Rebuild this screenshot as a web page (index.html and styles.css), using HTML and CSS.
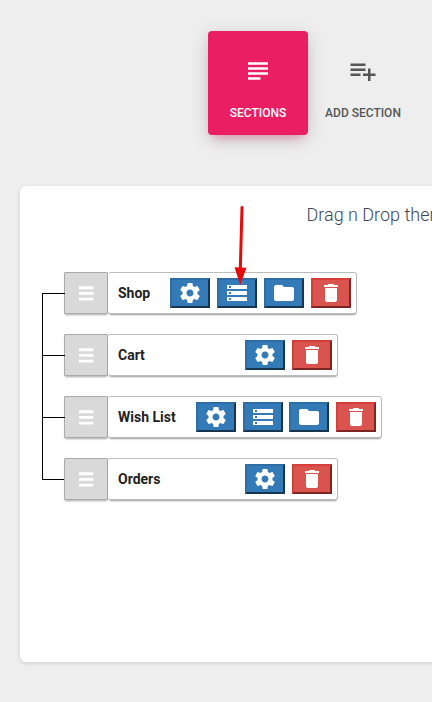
FILE: index.html
```html
<!DOCTYPE html>
<html lang="en">
<head>
<meta charset="utf-8">
<title>Sections</title>
<link rel="stylesheet" href="styles.css">
</head>
<body>
<svg class="defs" aria-hidden="true">
  <symbol id="gear" viewBox="0 0 24 24"><path d="M19.43 12.98c.04-.32.07-.64.07-.98s-.03-.66-.07-.98l2.11-1.65c.19-.15.24-.42.12-.64l-2-3.46c-.12-.22-.39-.3-.61-.22l-2.49 1c-.52-.4-1.08-.73-1.69-.98l-.38-2.65C14.46 2.18 14.25 2 14 2h-4c-.25 0-.46.18-.49.42l-.38 2.65c-.61.25-1.17.59-1.69.98l-2.49-1c-.23-.09-.49 0-.61.22l-2 3.46c-.13.22-.07.49.12.64l2.11 1.65c-.04.32-.07.65-.07.98s.03.66.07.98l-2.11 1.65c-.19.15-.24.42-.12.64l2 3.46c.12.22.39.3.61.22l2.49-1c.52.4 1.08.73 1.69.98l.38 2.65c.03.24.24.42.49.42h4c.25 0 .46-.18.49-.42l.38-2.65c.61-.25 1.17-.59 1.69-.98l2.49 1c.23.09.49 0 .61-.22l2-3.46c.12-.22.07-.49-.12-.64l-2.11-1.65zM12 15.500c-1.930 0-3.500-1.570-3.500-3.500s1.570-3.500 3.500-3.500 3.500 1.570 3.500 3.500-1.570 3.500-3.500 3.500z"/></symbol>
  <symbol id="storage" viewBox="0 0 24 24"><path d="M2 20h20v-4H2v4zm2-3h2v2H4v-2zM2 4v4h20V4H2zm4 3H4V5h2v2zm-4 7h20v-4H2v4zm2-3h2v2H4v-2z"/></symbol>
  <symbol id="folder" viewBox="0 0 24 24"><path d="M10 4H4c-1.100 0-1.990.9-1.990 2L2 18c0 1.100.9 2 2 2h16c1.100 0 2-.9 2-2V8c0-1.100-.9-2-2-2h-8l-2-2z"/></symbol>
  <symbol id="trash" viewBox="0 0 24 24"><path d="M6 19c0 1.100.9 2 2 2h8c1.100 0 2-.9 2-2V7H6v12zM19 4h-3.500l-1-1h-5l-1 1H5v2h14V4z"/></symbol>
  <symbol id="grip" viewBox="0 0 42 42"><path d="M14 15.700h14.400M14 21.400h14.400M14 27.100h14.400" stroke="#fff" stroke-width="2.900"/></symbol>
</svg>

<nav class="tabs">
  <a class="tab active">
    <svg viewBox="0 0 24 24"><path d="M14 17H4v2h10v-2zm6-8H4v2h16V9zM4 15h16v-2H4v2zM4 5v2h16V5H4z"/></svg>
    <span>SECTIONS</span>
  </a>
  <a class="tab">
    <svg viewBox="0 0 24 24"><path d="M14 10H2v2h12v-2zm0-4H2v2h12V6zm4 8v-4h-2v4h-4v2h4v4h2v-4h4v-2h-4zM2 16h8v-2H2v2z"/></svg>
    <span>ADD SECTION</span>
  </a>
</nav>

<main class="card">
  <h4 class="title">Drag n Drop them</h4>
  <ul class="tree">
    <li class="node">
      <span class="handle"><svg><use href="#grip"/></svg></span>
      <div class="row shop">
        <span class="label">Shop</span>
        <div class="actions">
          <button class="btn"><svg><use href="#gear"/></svg></button>
          <button class="btn"><svg><use href="#storage"/></svg></button>
          <button class="btn"><svg><use href="#folder"/></svg></button>
          <button class="btn danger"><svg><use href="#trash"/></svg></button>
        </div>
      </div>
    </li>
    <li class="node">
      <span class="handle"><svg><use href="#grip"/></svg></span>
      <div class="row">
        <span class="label">Cart</span>
        <div class="actions">
          <button class="btn"><svg><use href="#gear"/></svg></button>
          <button class="btn danger"><svg><use href="#trash"/></svg></button>
        </div>
      </div>
    </li>
    <li class="node">
      <span class="handle"><svg><use href="#grip"/></svg></span>
      <div class="row wish">
        <span class="label">Wish List</span>
        <div class="actions">
          <button class="btn"><svg><use href="#gear"/></svg></button>
          <button class="btn"><svg><use href="#storage"/></svg></button>
          <button class="btn"><svg><use href="#folder"/></svg></button>
          <button class="btn danger"><svg><use href="#trash"/></svg></button>
        </div>
      </div>
    </li>
    <li class="node">
      <span class="handle"><svg><use href="#grip"/></svg></span>
      <div class="row">
        <span class="label">Orders</span>
        <div class="actions">
          <button class="btn"><svg><use href="#gear"/></svg></button>
          <button class="btn danger"><svg><use href="#trash"/></svg></button>
        </div>
      </div>
    </li>
  </ul>
</main>

<svg class="arrow" viewBox="0 0 20 84">
  <path d="M10 4.500L8.300 66" stroke="#e40b0b" stroke-width="3" stroke-linecap="round"/>
  <path d="M2.500 64.300L14.500 64.700L8.200 82z" fill="#e40b0b"/>
</svg>
</body>
</html>
```
FILE: styles.css
```css
* { box-sizing: border-box; }

body {
  margin: 0;
  width: 432px;
  height: 702px;
  overflow: hidden;
  background: #eee;
  font-family: Roboto, "Liberation Sans", sans-serif;
}

svg { display: block; fill: currentColor; }
.defs { position: absolute; width: 0; height: 0; }

.tabs {
  display: flex;
  gap: 5px;
  padding: 31px 0 0 208px;
}

.tab {
  flex: none;
  width: 100px;
  height: 104px;
  padding-top: 25px;
  display: flex;
  flex-direction: column;
  align-items: center;
  border-radius: 4px;
  color: #555;
  font-size: 12px;
  font-weight: 500;
  line-height: 18px;
  white-space: nowrap;
}
.tab svg { width: 30px; height: 30px; margin-bottom: 18px; }
.tab.active {
  color: #fff;
  background: #e91e63;
  box-shadow: 0 4px 20px 0 rgba(0, 0, 0, .14), 0 7px 10px -5px rgba(233, 30, 99, .4);
}

.card {
  width: 500px;
  height: 476px;
  margin: 51px 0 0 20px;
  background: #fff;
  border-radius: 6px;
  box-shadow: 0 1px 4px 0 rgba(0, 0, 0, .14);
  overflow: hidden;
}

.title {
  margin: 0;
  padding: 16px 0 0 286.500px;
  height: 86px;
  color: #3c4858;
  font-size: 18px;
  font-weight: 300;
  line-height: 25px;
  white-space: nowrap;
}

.tree {
  margin: 0 0 0 22px;
  padding: 0;
  list-style: none;
  display: flex;
  flex-direction: column;
  gap: 20px;
}

.node {
  position: relative;
  display: flex;
  height: 42px;
  padding-left: 22px;
}
.node::before {
  content: "";
  position: absolute;
  left: 0;
  top: 21px;
  width: 22px;
  height: 62px;
  border: solid #000;
  border-width: 1px 0 0 1px;
}
.node:last-child::before {
  height: 1px;
  border-left-width: 0;
}

.handle {
  flex: none;
  width: 44px;
  height: 42px;
  background: #d9d9d9;
  border: 1px solid #aaa;
  border-radius: 1px;
  box-shadow: 0 2px 2px -1px rgba(0, 0, 0, .35);
}
.handle svg { width: 42px; height: 42px; margin-top: -1px; }

.row {
  width: 230px;
  display: flex;
  align-items: center;
  justify-content: space-between;
  padding: 0 5px 0 10px;
  background: #fff;
  border: 1px solid #bbb;
  border-left: 0;
  border-radius: 3px;
  box-shadow: 0 2px 2px -1px rgba(0, 0, 0, .4);
}
.row.shop { width: 249px; }
.row.shop .actions { gap: 7px; }
.row.wish { width: 274px; }

.label {
  color: #222;
  font-size: 14px;
  font-weight: 700;
  white-space: nowrap;
}

.actions { display: flex; gap: 6.700px; }

.btn {
  width: 40px;
  height: 30px;
  padding: 0;
  display: grid;
  place-items: center;
  color: #fff;
  background: #337ab7;
  border: 2px solid;
  border-color: #2e6da4 #17354f #17354f #2e6da4;
}
.btn.danger {
  background: #d9534f;
  border-color: #d43f3a #7c2522 #7c2522 #d43f3a;
}
.btn svg { width: 24px; height: 24px; }

/* Pointer drawn over the tree */
.arrow {
  position: absolute;
  left: 232px;
  top: 203px;
  width: 20px;
  height: 84px;
}
```
